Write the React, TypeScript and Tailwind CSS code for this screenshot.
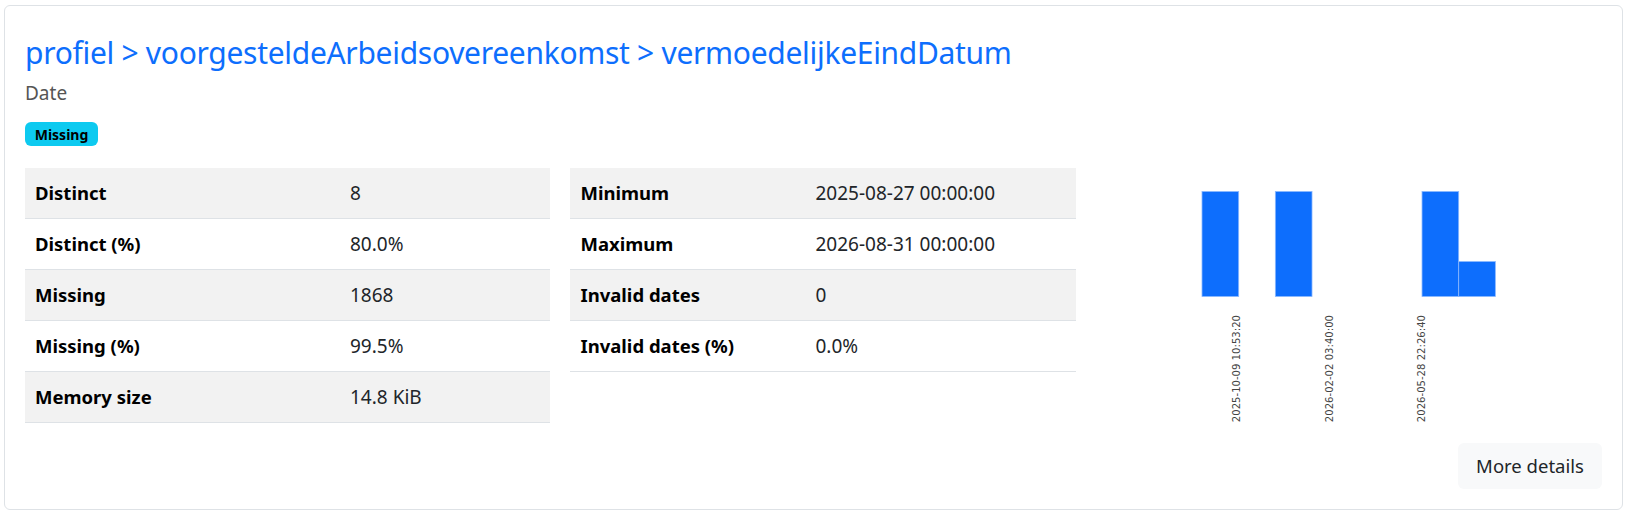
import React from "react";

const leftRows = [
  ["Distinct", "8"],
  ["Distinct (%)", "80.0%"],
  ["Missing", "1868"],
  ["Missing (%)", "99.5%"],
  ["Memory size", "14.8 KiB"],
];

const rightRows = [
  ["Minimum", "2025-08-27 00:00:00"],
  ["Maximum", "2026-08-31 00:00:00"],
  ["Invalid dates", "0"],
  ["Invalid dates (%)", "0.0%"],
];

// histogram bins, relative heights
const bins = [1, 0, 1, 0, 0, 0, 1, 0.333];
const ticks = [
  { x: 160, label: "2025-10-09 10:53:20" },
  { x: 253, label: "2026-02-02 03:40:00" },
  { x: 345, label: "2026-05-28 22:26:40" },
];

function StatTable({ rows, valueCol }: { rows: string[][]; valueCol: string }) {
  return (
    <div className="flex flex-col">
      {rows.map(([k, v], i) => (
        <div
          key={k}
          className={`flex h-[51px] items-center border-b border-[#dee2e6] ${i % 2 === 0 ? "bg-[#f2f2f2]" : "bg-white"}`}
        >
          <div className={`${valueCol} pl-[10px] font-bold text-[18.5px] text-[#000]`}>{k}</div>
          <div className="text-[19px] text-[#212529]">{v}</div>
        </div>
      ))}
    </div>
  );
}

function Histogram() {
  const x0 = 126;
  const bw = 36.67;
  const base = 128.5;
  const full = 105;
  return (
    <svg width="526" height="255" viewBox="0 0 526 255">
      {bins.map((h, i) =>
        h > 0 ? (
          <rect
            key={i}
            x={x0 + i * bw}
            y={base - full * h}
            width={bw}
            height={full * h}
            fill="#0d6efd"
            stroke="#8bb8fe"
            strokeWidth="0.8"
          />
        ) : null
      )}
      {ticks.map((t) => (
        <text
          key={t.label}
          transform={`translate(${t.x + 3.5} 147) rotate(-90)`}
          textAnchor="end"
          fontSize="10.1"
          fill="#444"
          fontFamily="'DejaVu Sans', sans-serif"
        >
          {t.label}
        </text>
      ))}
    </svg>
  );
}

export default function App() {
  return (
    <div className="bg-white w-[1631px] h-[518px] pt-[5px] pl-[4px] font-['Noto_Sans',sans-serif]">
      <div className="w-[1619px] h-[505px] border border-[#dee2e6] rounded-[6px] px-[20px] pt-[29px]">
        <h3 className="text-[30px] leading-[36px] text-[#0d6efd] tracking-[-0.3px]">
          profiel &gt; voorgesteldeArbeidsovereenkomst &gt; vermoedelijkeEindDatum
        </h3>
        <div className="mt-[10px] text-[19px] leading-[24px] text-[#555]">Date</div>
        <div className="mt-[17px] flex">
          <span className="h-[24px] w-[73px] rounded-[6px] bg-[#0dcaf0] text-[14px] font-bold text-black flex items-center justify-center">
            Missing
          </span>
        </div>
        <div className="mt-[22px] flex">
          <div className="w-[526px]">
            <StatTable rows={leftRows} valueCol="w-[325px]" />
          </div>
          <div className="w-[506px] ml-[20px]">
            <StatTable rows={rightRows} valueCol="w-[245px]" />
          </div>
          <div className="flex-1">
            <Histogram />
          </div>
        </div>
        <div className="mt-[20px] flex justify-end">
          <button className="h-[46px] w-[144px] rounded-[6px] bg-[#f8f9fa] text-[18.5px] text-[#212529]">
            More details
          </button>
        </div>
      </div>
    </div>
  );
}
